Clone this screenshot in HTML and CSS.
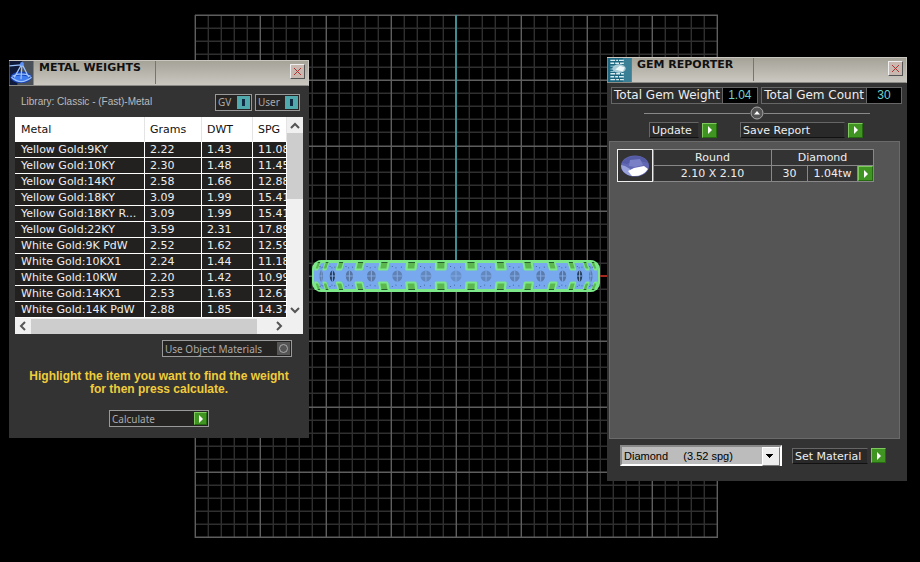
FILE: index.html
```
<!DOCTYPE html>
<html lang="en">
  <head>
    <meta charset="UTF-8" />
    <meta name="viewport" content="width=device-width, initial-scale=1.0" />
    <title>Metal Weights</title>
    <link rel="stylesheet" href="styles.css">
  </head>
  <body>
    <main class="desktop">
      <svg class="viewport" viewBox="0 0 524 524" aria-hidden="true">
        <g id="grid"></g>
        <path class="axis-y" d="M262 1V247" />
        <path class="axis-x" d="M405 262H418" />
        <rect class="ring-edge" x="118" y="246" width="288" height="32" rx="9" />
        <rect class="ring-band" x="120" y="249" width="284" height="26" rx="9" />
        <g id="ring"></g>
      </svg>

      <section class="window metal" aria-labelledby="metal-title">
        <header class="titlebar">
          <svg class="logo" viewBox="0 0 25 25" aria-hidden="true">
            <rect width="25" height="25" fill="#4b5159" />
            <path d="M0 0H13L8 25H0Z" fill="#101a3a" />
            <ellipse cx="12" cy="17" rx="11" ry="6" fill="#1743b8" />
            <ellipse cx="12" cy="18" rx="8" ry="3" fill="#3f7cf0" />
            <path d="M2 17Q12 26 23 17M0 5L12 4M13 3L5 17M13 3L20 17M13 3L12 19M3 16Q12 11 22 16" fill="none" stroke="#9cc4ff" stroke-width="1.3" />
            <circle cx="13" cy="3" r="2" fill="#5c93ff" />
          </svg>
          <h2 id="metal-title">METAL WEIGHTS</h2>
          <button class="close" aria-label="Close Metal Weights">
            <svg viewBox="0 0 9 9"><path d="M1 1L8 8M8 1L1 8" /></svg>
          </button>
        </header>

        <div class="library">
          <p>Library: Classic - (Fast)-Metal</p>
          <button class="toggle gv" aria-pressed="true"><span>GV</span><i></i></button>
          <button class="toggle user" aria-pressed="true"><span>User</span><i></i></button>
        </div>

        <div class="list">
          <div class="list-view">
            <table class="metals">
              <thead>
                <tr><th>Metal</th><th>Grams</th><th>DWT</th><th>SPG</th></tr>
              </thead>
              <tbody>
                <tr><td>Yellow Gold:9KY</td><td>2.22</td><td>1.43</td><td>11.08</td></tr>
                <tr><td>Yellow Gold:10KY</td><td>2.30</td><td>1.48</td><td>11.45</td></tr>
                <tr><td>Yellow Gold:14KY</td><td>2.58</td><td>1.66</td><td>12.88</td></tr>
                <tr><td>Yellow Gold:18KY</td><td>3.09</td><td>1.99</td><td>15.41</td></tr>
                <tr><td>Yellow Gold:18KY R...</td><td>3.09</td><td>1.99</td><td>15.41</td></tr>
                <tr><td>Yellow Gold:22KY</td><td>3.59</td><td>2.31</td><td>17.89</td></tr>
                <tr><td>White Gold:9K PdW</td><td>2.52</td><td>1.62</td><td>12.59</td></tr>
                <tr><td>White Gold:10KX1</td><td>2.24</td><td>1.44</td><td>11.18</td></tr>
                <tr><td>White Gold:10KW</td><td>2.20</td><td>1.42</td><td>10.99</td></tr>
                <tr><td>White Gold:14KX1</td><td>2.53</td><td>1.63</td><td>12.61</td></tr>
                <tr><td>White Gold:14K PdW</td><td>2.88</td><td>1.85</td><td>14.37</td></tr>
              </tbody>
            </table>
          </div>
          <div class="scroll-v">
            <svg viewBox="0 0 16 16"><path d="M4 11L8 7L12 11" /></svg>
            <div class="thumb"></div>
            <svg viewBox="0 0 16 16"><path d="M4 6L8 10L12 6" /></svg>
          </div>
          <div class="scroll-h">
            <svg viewBox="0 0 16 16"><path d="M10 4L6 8L10 12" /></svg>
            <div class="thumb"></div>
            <svg viewBox="0 0 16 16"><path d="M6 4L10 8L6 12" /></svg>
          </div>
        </div>

        <div class="metal-actions">
          <button class="lcd materials"><span>Use Object Materials</span><i class="dot"></i></button>
          <p class="hint">Highlight the item you want to find the weight<br />for then press calculate.</p>
          <button class="lcd calculate"><span>Calculate</span><i class="go"></i></button>
        </div>
      </section>

      <section class="window gems" aria-labelledby="gem-title">
        <header class="titlebar">
          <svg class="logo" viewBox="0 0 25 25" aria-hidden="true">
            <rect width="25" height="25" fill="#1d6680" />
            <path d="M16 0H25V25H16Z" fill="#3b7f97" />
            <path d="M3 2.500H8M9 2.500H11M12 2.500H17M3 5.500H7M8 5.500H12M13 5.500H17M3 16.500H8M9 16.500H13M14 16.500H17M3 19.500H7M8 19.500H11M12 19.500H17M3 22.500H8M9 22.500H12M13 22.500H17" stroke="#d8eef2" stroke-width="1.500" />
            <path d="M3 8.500H7M3 11.500H6M3 14H7" stroke="#9fd0da" />
            <ellipse cx="12" cy="11" rx="7" ry="4.500" fill="#a9cbd6" />
            <path d="M8 12L13 8L18 10L16 14Z" fill="#eef8fa" />
          </svg>
          <h2 id="gem-title">GEM REPORTER</h2>
          <button class="close" aria-label="Close Gem Reporter">
            <svg viewBox="0 0 9 9"><path d="M1 1L8 8M8 1L1 8" /></svg>
          </button>
        </header>

        <div class="totals">
          <p><span>Total Gem Weight</span><output>1.04</output></p>
          <p><span>Total Gem Count</span><output>30</output></p>
        </div>

        <div class="divider">
          <button aria-label="Collapse"><svg viewBox="0 0 14 14"><circle cx="7" cy="7" r="6" fill="#555" stroke="#aaa" /><path d="M4 8.500L7 5L10 8.500Z" fill="#fff" /></svg></button>
        </div>

        <div class="report-actions">
          <button class="command update"><span>Update</span><i class="go"></i></button>
          <button class="command save"><span>Save Report</span><i class="go"></i></button>
        </div>

        <div class="report">
          <div class="gem">
            <svg class="stone" viewBox="0 0 34 31" aria-label="Round">
              <ellipse cx="17" cy="16" rx="14" ry="10.500" fill="#6268b4" />
              <path d="M4 13Q8 6 18 6Q27 6 30 13L26 12L16 10L9 14Z" fill="#555ba4" />
              <path d="M12 10L22 9L25 15L17 17L11 16Z" fill="#7a80c6" />
              <path d="M3 15Q3 24 14 26L12 19L7 16Z" fill="#9aa2dc" />
              <path d="M10 21L16 18L26 16L30 19Q25 27 14 26Z" fill="#fff" />
            </svg>
            <table class="details">
              <tr><td class="size">Round</td><td colspan="3">Diamond</td></tr>
              <tr><td>2.10 X 2.10</td><td class="count">30</td><td class="weight">1.04tw</td><td class="pick"><button class="go" aria-label="Select Round Diamond"></button></td></tr>
            </table>
          </div>
        </div>

        <footer class="material">
          <div class="select">
            <select aria-label="Material">
              <option>Diamond &nbsp; &nbsp; (3.52 spg)</option>
            </select>
          </div>
          <button class="command set"><span>Set Material</span><i class="go"></i></button>
        </footer>
      </section>
    </main>

    <script>
      const svgNs = "http://www.w3.org/2000/svg";
      const grid = document.querySelector("#grid");
      const ring = document.querySelector("#ring");

      function draw(parent, tag, attributes) {
        const shape = document.createElementNS(svgNs, tag);
        Object.keys(attributes).forEach((name) => shape.setAttribute(name, attributes[name]));
        parent.appendChild(shape);
      }

      // minor lines first, so that the major lines stay on top
      function drawGrid() {
        [false, true].forEach((major) => {
          for (let i = 0; i <= 40; i++) {
            if ((i % 5 == 0) != major) continue;
            const at = Math.round(i * 13.05) + 1.3;
            const look = major ? "major" : "minor";
            draw(grid, "path", { class: look, d: `M${at} 1V524M1 ${at}H524` });
          }
        });
      }

      // stones and prongs get narrower towards both ends of the ring
      function drawRing() {
        const step = (12.4 * Math.PI) / 180;
        for (let i = -6.5; i <= 6.5; i++) {
          const x = 262 + 140 * Math.sin(i * step);
          const w = Math.max(4, 12 * Math.cos(i * step));
          const lean = Math.sin(i * step) * 20;
          [1, -1].forEach((side) => {
            const place = `translate(${x} ${262 - side * 10.5}) skewX(${side * lean})`;
            draw(ring, "rect", { class: "prong", x: -w / 2, y: -5, width: w, height: 10, rx: 1.5, transform: place });
            draw(ring, "rect", { class: "prong-hole", x: -w / 3.4, y: -3, width: w / 1.7, height: 6, transform: place });
            draw(ring, "rect", { class: "prong-shade", x: -w / 3.4, y: -3 * side - 0.5, width: w / 1.7, height: 1, transform: place });
          });
        }
        for (let i = -6; i <= 6; i++) {
          const x = 262 + 140 * Math.sin(i * step);
          const scale = Math.cos(i * step);
          const rx = 5.5 * scale;
          const look = Math.abs(i) == 5 ? "stone-dark" : "stone-fill";
          draw(ring, "ellipse", { class: look, cx: x, cy: 262, rx: rx, ry: 5.5, opacity: 0.4 + Math.abs(i) / 10 });
          draw(ring, "path", { class: "cross", d: `M${x - rx} 262H${x + rx}M${x} 256.5V267.5` });
          [-1, 1].forEach((side) => {
            [-6, -2, 4].forEach((dx) => {
              draw(ring, "rect", { class: "speck", x: x + dx * scale, y: 262 + side * (8 + Math.abs(dx) / 3), width: 1, height: 1 });
            });
          });
        }
      }

      drawGrid();
      drawRing();
    </script>
  </body>
</html>
```
FILE: styles.css
```
* {
  box-sizing: border-box;
}

body {
  margin: 0;
  background-color: #000;
  font-family: "DejaVu Sans", Verdana, sans-serif;
  font-size: 11px;
}

h2,
p {
  margin: 0;
}

button {
  padding: 0;
  border: none;
  background: none;
  color: inherit;
  font: inherit;
  cursor: pointer;
}

svg {
  display: block;
}

.desktop {
  position: relative;
  min-height: 100vh;
  overflow: hidden;
}

/* modelling viewport */

.viewport {
  position: absolute;
  left: 194px;
  top: 14px;
  width: 524px;
}

.minor,
.major {
  stroke: #2f2f2f;
  stroke-width: 1.4;
  fill: none;
}

.major {
  stroke: #5e5e5e;
}

.axis-y {
  stroke: #3f8c92;
  stroke-width: 2;
}

.axis-x {
  stroke: #a02a20;
  stroke-width: 2;
}

.ring-edge,
.prong {
  fill: #7de88a;
}

.ring-band {
  fill: #78a8ee;
}

.prong-hole {
  fill: #5cb84e;
}

.prong-shade {
  fill: #23602a;
}

.stone-fill {
  fill: #4e688e;
}

.stone-dark {
  fill: #1c3048;
}

.cross {
  stroke: #82aae6;
  stroke-width: 1;
}

.speck {
  fill: #4668a0;
}

/* windows */

.window {
  position: absolute;
  width: 300px;
  background-color: #333;
  color: #eee;
}

.metal {
  left: 9px;
  top: 60px;
}

.gems {
  left: 607px;
  top: 57px;
}

.titlebar {
  display: flex;
  align-items: flex-start;
  height: 26px;
  border: 1px solid #c9c7c0;
  border-left: none;
  border-bottom-color: #8d8b85;
  background: linear-gradient(#a5a298, #cbc8c1);
}

.logo {
  width: 25px;
  height: 24px;
}

.titlebar h2 {
  width: 122px;
  height: 23px;
  padding-left: 5px;
  border-right: 1px solid #77756f;
  color: #111;
  font-size: 11px;
  line-height: 13px;
}

.close {
  display: flex;
  align-items: center;
  justify-content: center;
  width: 15px;
  height: 15px;
  margin: 3px 3px 0 auto;
  border: 1px solid;
  border-color: #eee #555 #555 #eee;
  background-color: #c8b8b0;
}

.close svg {
  width: 9px;
  height: 9px;
  stroke: #a33;
}

/* metal weights */

.library {
  display: flex;
  gap: 3px;
  padding: 8px 9px 6px 12px;
  color: #bbb;
  font-family: "Liberation Sans", Arial, sans-serif;
  font-size: 10px;
  line-height: 15px;
}

.library p {
  flex: 1;
}

.toggle,
.lcd {
  display: flex;
  align-items: center;
  justify-content: space-between;
  height: 17px;
  padding: 0 1px 0 2px;
  border: 1px solid #999;
  background-color: #262422;
  color: #aaa;
  font-family: "Noto Sans", sans-serif;
  font-size: 10px;
}

.gv {
  width: 37px;
}

.user {
  width: 45px;
}

.toggle i {
  width: 13px;
  height: 13px;
  border: solid #4fa9ad;
  border-width: 3px 5px;
  background-color: #102c44;
}

.list {
  display: grid;
  grid-template-columns: 1fr 16px;
  margin: 0 6px;
  background-color: #f0f0f0;
}

.list-view {
  overflow: hidden;
  background-color: #fff;
}

.metals {
  width: 100%;
  border-collapse: separate;
  border-spacing: 0;
  table-layout: fixed;
}

.metals th,
.metals td {
  height: 16px;
  padding: 0 0 0 5px;
  border-right: 1px solid #fff;
  border-bottom: 1px solid #fff;
  background-color: #23211f;
  font-weight: normal;
  line-height: 15px;
  text-align: left;
  white-space: nowrap;
  overflow: hidden;
}

.metals th:first-child,
.metals td:first-child {
  padding-left: 6px;
}

.metals th {
  height: 25px;
  border-right-color: #e4e4e4;
  background-color: #fff;
  color: #111;
}

.metals th:nth-child(1) {
  width: 130px;
}

.metals th:nth-child(2) {
  width: 57px;
}

.metals th:nth-child(3) {
  width: 51px;
}

.scroll-v,
.scroll-h {
  display: flex;
}

.scroll-v {
  flex-direction: column;
}

.scroll-h {
  height: 16px;
  align-items: center;
}

.scroll-v svg,
.scroll-h svg {
  width: 16px;
  height: 16px;
  fill: none;
  stroke: #555;
  stroke-width: 2;
}

.scroll-v .thumb {
  height: 66px;
  background-color: #cdcdcd;
}

.scroll-v svg:last-child {
  margin-top: auto;
}

.scroll-h .thumb {
  flex: 1;
  height: 15px;
  margin-right: 14px;
  background-color: #cdcdcd;
}

.metal-actions {
  display: flex;
  flex-direction: column;
  align-items: center;
  padding: 6px 17px 11px;
}

.materials {
  align-self: flex-end;
  width: 130px;
}

.calculate {
  width: 100px;
}

.hint {
  padding: 13px 0 14px;
  color: #f0cc3c;
  font-family: "Liberation Sans", Arial, sans-serif;
  font-size: 12px;
  font-weight: bold;
  line-height: 13px;
  text-align: center;
  white-space: nowrap;
}

.dot {
  display: flex;
  align-items: center;
  justify-content: center;
  width: 13px;
  height: 13px;
  background-color: #555;
}

.dot::before {
  content: "";
  width: 7px;
  height: 7px;
  border: 1px solid #aaa;
  border-radius: 50%;
}

.go {
  display: flex;
  align-items: center;
  justify-content: center;
  width: 15px;
  height: 15px;
  border: 1px solid;
  border-color: #7fc860 #256a10 #256a10 #7fc860;
  background-color: #3f9422;
}

.go::before {
  content: "";
  border: solid transparent;
  border-width: 4px 0 4px 4px;
  border-left-color: #fff;
}

.lcd .go {
  width: 13px;
  height: 13px;
}

/* gem reporter */

.totals {
  display: flex;
  justify-content: space-between;
  padding: 4px 5px 0 4px;
}

.totals p {
  display: flex;
  height: 17px;
  border: 1px solid #666;
  background-color: #111;
  line-height: 15px;
}

.totals span {
  padding: 0 2px;
  border-right: 1px solid #666;
  background-color: #2c2c2c;
  font-size: 12px;
}

.totals output {
  width: 34px;
  background-color: #000;
  color: #6fd0d0;
  font-family: "Liberation Sans", Arial, sans-serif;
  font-size: 12px;
  text-align: center;
}

.divider {
  display: flex;
  align-items: center;
  height: 14px;
  margin: 2px 37px 0;
}

.divider::before,
.divider::after {
  content: "";
  flex: 1;
  height: 1px;
  background-color: #888;
}

.divider svg {
  width: 14px;
  height: 14px;
}

.report-actions {
  display: flex;
  gap: 23px;
  padding: 2px 42px 3px;
}

.command {
  display: flex;
  align-items: center;
  gap: 3px;
}

.command span {
  width: 50px;
  height: 16px;
  padding-left: 2px;
  border: 1px solid;
  border-color: #666 #333 #111 #666;
  background-color: #292929;
  line-height: 15px;
  text-align: left;
  white-space: nowrap;
}

.save span {
  width: 105px;
}

.set span {
  width: 76px;
}

.report {
  height: 298px;
  margin: 0 7px 0 2px;
  padding: 7px;
  border: 1px solid #6a6a6a;
  background-color: #555;
}

.gem {
  display: flex;
  width: 257px;
  background-color: #333;
}

.stone {
  width: 36px;
  height: 33px;
  border: 1px solid #eee;
}

.details {
  flex: 1;
  border-collapse: collapse;
  table-layout: fixed;
}

.details td {
  height: 16px;
  padding: 0;
  border: 1px solid #888;
  line-height: 15px;
  text-align: center;
}

.details .size {
  width: 118px;
}

.details .count {
  width: 36px;
}

.details .pick {
  width: 16px;
}

.material {
  display: flex;
  align-items: center;
  gap: 10px;
  padding: 6px 13px 15px;
}

.select {
  position: relative;
}

.select select {
  appearance: none;
  display: block;
  width: 162px;
  height: 21px;
  padding: 0 20px 0 2px;
  border: 2px solid;
  border-color: #888 #fff #fff #888;
  border-radius: 0;
  background-color: #bcbcbc;
  color: #000;
  font-family: "Liberation Sans", Arial, sans-serif;
  font-size: 11px;
}

.select::after {
  content: "";
  position: absolute;
  top: 2px;
  right: 2px;
  width: 16px;
  height: 17px;
  border: 1px solid;
  border-color: #fff #777 #777 #fff;
  background: linear-gradient(#000, #000) 3px 6px / 7px 1px no-repeat, linear-gradient(#000, #000) 4px 7px / 5px 1px no-repeat,
    linear-gradient(#000, #000) 5px 8px / 3px 1px no-repeat, linear-gradient(#000, #000) 6px 9px / 1px 1px no-repeat, #eee;
  pointer-events: none;
}
```
